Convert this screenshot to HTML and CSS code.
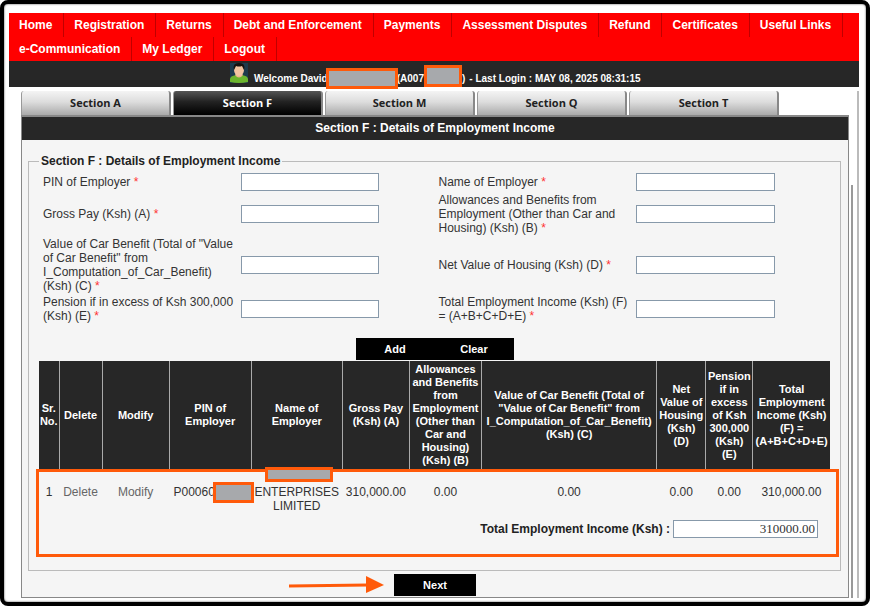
FILE: index.html
```html
<!DOCTYPE html>
<html lang="en">
<head>
<meta charset="utf-8">
<title>Section F : Details of Employment Income</title>
<link rel="stylesheet" href="styles.css">
</head>
<body>
<div class="frame">
  <nav class="menu">
    <a href="#">Home</a><a href="#">Registration</a><a href="#">Returns</a><a href="#">Debt and Enforcement</a><a href="#">Payments</a><a href="#">Assessment Disputes</a><a href="#">Refund</a><a href="#">Certificates</a><a href="#">Useful Links</a><a href="#">e-Communication</a><a href="#">My Ledger</a><a href="#">Logout</a>
  </nav>
  <div class="welcome">
    <svg class="avatar" viewBox="0 0 18 20" aria-hidden="true">
      <rect width="18" height="20" fill="#1e3a4c"/>
      <path d="M0 19V16Q0 13 6 12H12Q18 13 18 16V19Q9 21 0 19Z" fill="#6cb52d"/>
      <path d="M5 12Q9 17 13 12L11 10H7Z" fill="#eeb58e"/>
      <ellipse cx="9" cy="7" rx="5" ry="6" fill="#f3c4a0"/>
      <path d="M4 7Q2 0 9 0Q16 0 14 7L12 3Q9 4 6 3Z" fill="#17110e"/>
    </svg>
    <span>Welcome David</span><i class="mask mask-name"></i><span>(A007</span><i class="mask mask-pin"></i><span>)</span><span class="login">- Last Login : MAY 08, 2025 08:31:15</span>
  </div>
  <div class="content">
    <main class="main">
      <div class="tabs">
        <button class="tab">Section A</button>
        <button class="tab active">Section F</button>
        <button class="tab">Section M</button>
        <button class="tab">Section Q</button>
        <button class="tab">Section T</button>
      </div>
      <section class="panel">
        <h1 class="title">Section F : Details of Employment Income</h1>
        <fieldset class="group">
          <legend>Section F : Details of Employment Income</legend>
          <div class="fields">
            <label for="pin">PIN of Employer <b>*</b></label><input id="pin" type="text">
            <label for="name">Name of Employer <b>*</b></label><input id="name" type="text">
            <label for="gross">Gross Pay (Ksh) (A) <b>*</b></label><input id="gross" type="text">
            <label for="allow">Allowances and Benefits from Employment (Other than Car and Housing) (Ksh) (B) <b>*</b></label><input id="allow" type="text">
            <label for="car">Value of Car Benefit (Total of "Value of Car Benefit" from I_Computation_of_Car_Benefit) (Ksh) (C) <b>*</b></label><input id="car" type="text">
            <label for="housing">Net Value of Housing (Ksh) (D) <b>*</b></label><input id="housing" type="text">
            <label for="pension">Pension if in excess of Ksh 300,000 (Ksh) (E) <b>*</b></label><input id="pension" type="text">
            <label for="total">Total Employment Income (Ksh) (F) = (A+B+C+D+E) <b>*</b></label><input id="total" type="text">
          </div>
          <div class="actions"><button class="btn">Add</button><button class="btn">Clear</button></div>
          <table class="grid">
            <colgroup><col class="c-no"><col class="c-del"><col class="c-mod"><col class="c-pin"><col class="c-name"><col class="c-gross"><col class="c-allow"><col class="c-car"><col class="c-house"><col class="c-pens"><col class="c-total"></colgroup>
            <thead><tr>
              <th>Sr. No.</th><th>Delete</th><th>Modify</th><th>PIN of Employer</th><th>Name of Employer</th><th>Gross Pay (Ksh) (A)</th><th>Allowances and Benefits from Employment (Other than Car and Housing) (Ksh) (B)</th><th>Value of Car Benefit (Total of "Value of Car Benefit" from I_Computation_of_Car_Benefit) (Ksh) (C)</th><th>Net Value of Housing (Ksh)<br>(D)</th><th>Pension if in excess of Ksh 300,000 (Ksh)<br>(E)</th><th>Total Employment Income (Ksh) (F) = (A+B+C+D+E)</th>
            </tr></thead>
            <tbody><tr>
              <td>1</td><td><a href="#">Delete</a></td><td><a href="#">Modify</a></td>
              <td><span class="pin">P00060<i class="mask mask-cell"></i></span></td>
              <td><span class="employer"><i class="mask mask-employer"></i>ENTERPRISES LIMITED</span></td>
              <td>310,000.00</td><td>0.00</td><td>0.00</td><td>0.00</td><td>0.00</td><td>310,000.00</td>
            </tr></tbody>
          </table>
          <div class="sum"><label for="sum">Total Employment Income (Ksh) :</label><input id="sum" type="text" value="310000.00"></div>
          <div class="highlight"></div>
        </fieldset>
        <div class="footer">
          <svg class="arrow" viewBox="0 0 96 20" aria-hidden="true"><path d="M1 11L80 10" stroke="#ff5a0a" stroke-width="3" fill="none"/><path d="M78 1L96 10L78 18Z" fill="#ff5a0a"/></svg>
          <button class="btn next">Next</button>
        </div>
      </section>
    </main>
    <div class="rail rail-inner"></div>
    <div class="rail rail-outer"></div>
  </div>
</div>
</body>
</html>
```
FILE: styles.css
```css
* { box-sizing: border-box; }
body {
  margin: 0;
  background: #fff;
  color: #333;
  font: 12px/14px "Liberation Sans", Arial, sans-serif;
}
a { color: inherit; text-decoration: none; }
button { margin: 0; font-family: inherit; }
.frame {
  display: flex;
  flex-direction: column;
  min-height: 100vh;
  padding: 9px 7px 4px 5px;
  border: 4px solid #000;
  border-radius: 8px;
  background: #fff;
  box-shadow: inset 0 0 2px #333;
}
.menu {
  display: flex;
  flex-wrap: wrap;
  background: #f00;
  color: #fff;
  font-weight: bold;
  line-height: 24px;
}
.menu a { padding: 0 11px 0 10px; border-right: 1px solid #c00000; }
.welcome {
  display: flex;
  align-items: flex-end;
  height: 26px;
  padding-left: 26%;
  background: #272727;
  color: #fff;
  font-size: 10px;
  font-weight: bold;
  line-height: 16px;
  white-space: nowrap;
}
.avatar { width: 18px; height: 20px; margin: 2px 6px 0 0; align-self: flex-start; }
.mask { display: block; position: relative; border: 3px solid #ff5a0a; background: #a7a9ac; }
.mask-name { width: 72px; height: 21px; margin: 0 -1px -2px -2px; }
.mask-pin { width: 38px; height: 22px; }
.login { margin-left: 4px; }
.content { display: flex; flex: 1; padding: 4px 0 0 12px; }
.main { display: flex; flex-direction: column; flex: 1; min-width: 0; }
.tabs { display: flex; gap: 2px; }
.tab {
  width: 150px;
  height: 24px;
  padding: 0 0 2px;
  border: 0;
  border-left: 1px solid #999;
  border-right: 2px solid #888;
  border-radius: 3px 3px 0 0;
  background: linear-gradient(#f4f4f4, #ddd 45%, #aaa);
  color: #222;
  font: bold 11px "Open Sans", sans-serif;
}
.tab.active { background: linear-gradient(#555, #222 45%, #000); color: #fff; }
.panel {
  display: flex;
  flex-direction: column;
  flex: 1;
  border: 1px solid #888;
  border-top-width: 2px;
  background: #f5f5f5;
}
.title {
  margin: 0;
  background: #272727;
  color: #fff;
  font-size: 12px;
  line-height: 23px;
  text-align: center;
}
.group {
  position: relative;
  min-width: 0;
  margin: 14px 7px 0 6px;
  padding: 5px 10px 32px;
  border: 1px solid #bbb;
}
.group legend { padding: 0 2px; color: #222; font-weight: bold; }
.fields {
  display: grid;
  grid-template-columns: repeat(4, 1fr);
  row-gap: 2px;
  align-items: center;
}
.fields label { padding-left: 4px; }
.fields b { color: #f33; font-weight: normal; }
input {
  height: 18px;
  padding: 0 2px;
  border: 1px solid #8799aa;
  border-radius: 0;
  background: #fff;
}
.fields input { width: 70%; margin-left: 4px; }
.actions { display: flex; justify-content: center; margin: 15px 0 1px; }
.btn {
  width: 79px;
  height: 22px;
  padding: 0;
  border: 0;
  background: #000;
  color: #fff;
  font-size: 11px;
  font-weight: bold;
}
.grid {
  width: 100%;
  table-layout: fixed;
  border-collapse: collapse;
  text-align: center;
}
.grid th {
  height: 108px;
  padding: 2px 0;
  border-left: 1px solid #aaa;
  background: #272727;
  color: #fff;
  font-size: 11px;
  line-height: 13px;
}
.grid th:first-child { border-left: 0; }
.grid td { height: 50px; padding: 16px 0 4px; vertical-align: top; }
.grid a { color: #666; }
.c-no { width: 20px; }
.c-del { width: 43px; }
.c-mod { width: 67px; }
.c-pin { width: 82px; }
.c-name { width: 91px; }
.c-gross { width: 67px; }
.c-allow { width: 72px; }
.c-car { width: 175px; }
.c-house { width: 49px; }
.c-pens { width: 47px; }
.c-total { width: 77px; }
.pin, .employer { display: block; position: relative; }
.pin { padding-right: 32px; }
.mask-cell { position: absolute; top: -3px; right: -3px; width: 41px; height: 21px; }
.mask-employer { position: absolute; top: -18px; left: 14px; width: 68px; height: 15px; z-index: 2; }
.sum { display: flex; justify-content: flex-end; align-items: center; gap: 3px; padding-right: 12px; margin-top: 1px; }
.sum label { color: #222; font-weight: bold; }
.sum input {
  width: 145px;
  color: #333;
  font: 13px "Liberation Serif", serif;
  text-align: right;
}
.highlight {
  position: absolute;
  right: 1px;
  bottom: 13px;
  left: 7px;
  height: 88px;
  border: 3px solid #ff5a0a;
  pointer-events: none;
}
.footer { display: grid; grid-template-columns: 1fr 82px 1fr; align-items: center; column-gap: 10px; padding-top: 3px; }
.arrow { width: 96px; height: 20px; justify-self: end; }
.btn.next { width: 82px; }
.rail { width: 2px; background: #999; }
.rail-inner { margin: 94px 0 0 2px; }
.rail-outer { margin-left: 4px; background: #bbb; }
```
